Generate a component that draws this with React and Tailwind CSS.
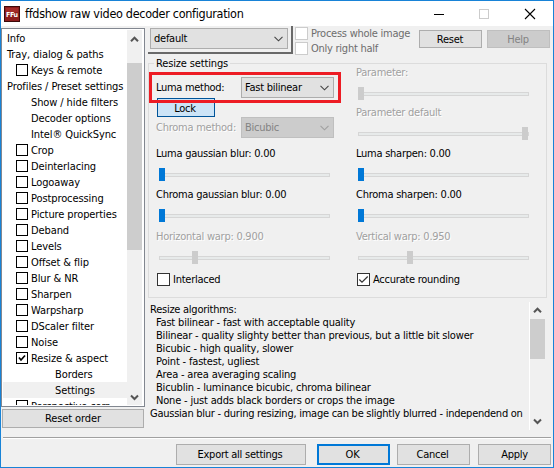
const TREE = [
  { label: 'Info', level: 0 },
  { label: 'Tray, dialog & paths', level: 0 },
  { label: 'Keys & remote', level: 1, check: true },
  { label: 'Profiles / Preset settings', level: 0 },
  { label: 'Show / hide filters', level: 1 },
  { label: 'Decoder options', level: 1 },
  { label: 'Intel® QuickSync', level: 1 },
  { label: 'Crop', level: 1, check: true },
  { label: 'Deinterlacing', level: 1, check: true },
  { label: 'Logoaway', level: 1, check: true },
  { label: 'Postprocessing', level: 1, check: true },
  { label: 'Picture properties', level: 1, check: true },
  { label: 'Deband', level: 1, check: true },
  { label: 'Levels', level: 1, check: true },
  { label: 'Offset & flip', level: 1, check: true },
  { label: 'Blur & NR', level: 1, check: true },
  { label: 'Sharpen', level: 1, check: true },
  { label: 'Warpsharp', level: 1, check: true },
  { label: 'DScaler filter', level: 1, check: true },
  { label: 'Noise', level: 1, check: true },
  { label: 'Resize & aspect', level: 1, check: true, checked: true },
  { label: 'Borders', level: 2 },
  { label: 'Settings', level: 2, selected: true },
  { label: 'Perspective corr.', level: 1, check: true },
]

const HELP = [
  'Fast bilinear - fast with acceptable quality',
  'Bilinear - quality slighty better than previous, but a little bit slower',
  'Bicubic - high quality, slower',
  'Point - fastest, ugliest',
  'Area - area averaging scaling',
  'Bicublin - luminance bicubic, chroma bilinear',
  'None - just adds black borders or crops the image',
]

const Arrow = ({ up, className = '' }) => (
  <svg width="9" height="7" viewBox="0 0 9 7" className={className}>
    <path d={up ? 'M1 5.2 4.5 1.7 8 5.2' : 'M1 1.5 4.5 5 8 1.5'} fill="none" stroke="#555" strokeWidth="2" />
  </svg>
)

const Select = ({ label, className, disabled }) => (
  <div
    className={`flex h-[21px] items-center justify-between border pl-[3px] pr-[4px] ${className} ${
      disabled ? 'border-[#bfbfbf] bg-[#ccc] text-[#838383]' : 'border-[#adadad] bg-[#e1e1e1]'}`}
  >
    <span>{label}</span>
    <svg width="9" height="6" viewBox="0 0 9 6">
      <path d="M.5.8 4.5 4.8 8.5.8" fill="none" stroke={disabled ? '#a0a0a0' : '#444'} strokeWidth="1.1" />
    </svg>
  </div>
)

const Button = ({ children, className = '' }) => (
  <div className={`flex items-center justify-center border ${className}`}>{children}</div>
)

const Check = ({ label, checked, disabled }) => (
  <div className={`flex h-[13px] items-center gap-[3px] ${disabled ? 'text-[#6d6d6d]' : ''}`}>
    <div className={`size-[13px] shrink-0 border bg-white ${disabled ? 'border-[#ccc]' : 'border-[#333]'}`}>
      {checked && (
        <svg width="11" height="11" viewBox="0 0 11 11">
          <path d="M1.3 5.5 4 8.2 9.7 2.5" fill="none" stroke="#333" strokeWidth="1.2" />
        </svg>
      )}
    </div>
    <span>{label}</span>
  </div>
)

const Slider = ({ label, pos, disabled, className = '' }) => (
  <div className={className}>
    <div className={`h-[14px] leading-[14px] ${disabled ? 'text-[#a0a0a0] [text-shadow:1px_1px_0_#fff]' : ''}`}>
      {label}
    </div>
    <div className="ml-[2px] mt-[7px] flex h-[13px] w-[171px] items-center">
      <div className="h-[4px] w-[171px] shrink-0 border border-[#d6d6d6] bg-[#e7eaea]" />
      <div
        className={`-ml-[171px] h-[13px] w-[6px] shrink-0 ${disabled ? 'bg-[#ccc]' : 'bg-[#0078d7]'}`}
        style={{ transform: `translateX(${pos}px)` }}
      />
    </div>
  </div>
)

const TitleBar = () => (
  <div className="flex h-[25px] items-center bg-white pl-[3px] text-[12.5px] tracking-[-0.3px]">
    <svg width="16" height="16" viewBox="0 0 16 16" className="mt-px">
      <rect width="16" height="16" fill="#3c0a0a" />
      <rect x="1" y="1" width="14" height="14" fill="#8c1c1c" />
      <rect x="2" y="2" width="12" height="4" fill="#a32a28" />
      <text x="2" y="10.5" fontSize="7" fontWeight="bold" fill="#fff" textLength="12" letterSpacing="0">FFu</text>
    </svg>
    <span className="ml-[5px] flex-1">ffdshow raw video decoder configuration</span>
    <svg width="102" height="12" viewBox="0 0 102 12" className="mr-[17px]" fill="none">
      <path d="M0 6.5h10" stroke="#000" />
      <rect x="45.5" y="1.5" width="9" height="9" stroke="#ccc" />
      <path d="M91 1l10 10M101 1 91 11" stroke="#000" strokeWidth="1.1" />
    </svg>
  </div>
)

const Tree = () => (
  <div className="flex h-[379px] w-[144px] border border-[#828790] bg-white p-px">
    <div className="h-[375px] w-[124px] overflow-hidden tracking-[-0.1px]">
      {TREE.map((n) => (
        <div
          key={n.label}
          className={`flex h-[16px] items-center whitespace-nowrap ${n.selected ? 'bg-[#f0f0f0]' : ''} ${
            n.level === 0 ? 'pl-[4px]' : n.level === 2 ? 'pl-[52px]' : n.check ? 'pl-[13px]' : 'pl-[28px]'}`}
        >
          {n.check && (
            <div className="mr-[3px] size-[12px] shrink-0 border border-black">
              {n.checked && (
                <svg width="10" height="10" viewBox="0 0 10 10">
                  <path d="M2 4.5 4 7 8 2.5" fill="none" stroke="#000" strokeWidth="1.7" />
                </svg>
              )}
            </div>
          )}
          <span>{n.label}</span>
        </div>
      ))}
    </div>
    <div className="flex w-[15px] flex-col items-center bg-[#f0f0f0]">
      <Arrow up className="my-[6px] h-[7px]" />
      <div className="mt-[14px] h-[187px] w-full bg-[#cdcdcd]" />
      <Arrow className="mb-[4px] mt-auto" />
    </div>
  </div>
)

const ResizeGroup = () => (
  <fieldset className="relative mt-[9px] h-[235px] w-[399px] border border-[#dcdcdc]">
    <div className="absolute left-[5px] top-[-7px] bg-[#f0f0f0] px-[2px] leading-[14px] tracking-[-0.15px]">Resize settings</div>
    <div className="flex">
      <div className="w-[200px] pl-[7px] pt-[13px]">
        <div className="flex h-[21px] items-center">
          <span className="w-[85px] tracking-[-0.3px]">Luma method:</span>
          <Select label="Fast bilinear" className="w-[93px]" />
        </div>
        <Button className="ml-px h-[19px] w-[58px] border-[#005499] bg-[#cce4f7] pr-[2px] pt-px">Lock</Button>
        <div className="flex h-[21px] items-center">
          <span className="w-[85px] text-[#a0a0a0] [text-shadow:1px_1px_0_#fff]">Chroma method:</span>
          <Select label="Bicubic" className="w-[93px]" disabled />
        </div>
        <Slider label="Luma gaussian blur: 0.00" pos={0} className="mt-[9px] pl-px -indent-px" />
        <Slider label="Chroma gaussian blur: 0.00" pos={0} className="mt-[7px] pl-px -indent-px" />
        <Slider label="Horizontal warp: 0.900" pos={33} className="mt-[8px] pl-px -indent-px" disabled />
        <div className="ml-px mt-[9px]"><Check label="Interlaced" /></div>
      </div>
      <div className="pl-[7px] pt-[3px]">
        <Slider label="Parameter:" pos={0} className="mt-[-1px]" disabled />
        <Slider label="Parameter default" pos={164} className="mt-[6px]" disabled />
        <Slider label="Luma sharpen: 0.00" pos={0} className="mt-[7px]" />
        <Slider label="Chroma sharpen: 0.00" pos={0} className="mt-[7px]" />
        <Slider label="Vertical warp: 0.950" pos={49} className="mt-[8px]" disabled />
        <div className="ml-px mt-[9px]"><Check label="Accurate rounding" checked /></div>
      </div>
    </div>
    {/* highlight over the luma method row */}
    <div className="absolute left-0 top-[8px] h-[31px] w-[192px] border-[3px] border-[#ed1c24]" />
  </fieldset>
)

const App = () => (
  <div className="h-[468px] w-[554px] overflow-hidden whitespace-nowrap border border-[#1883d7] bg-[#f0f0f0] font-['DejaVu_Sans_Condensed','DejaVu_Sans',sans-serif] text-[11px] leading-[13px] tracking-[-0.25px] text-black [font-stretch:condensed]">
    <TitleBar />
    <div className="flex h-[411px]">
      <div className="w-[144px] pt-[2px]">
        <Tree />
        <Button className="ml-px mt-[2px] h-[19px] w-[142px] border-[#adadad] bg-[#e1e1e1] tracking-[-0.1px]">Reset order</Button>
      </div>
      <div className="ml-[3px] w-[403px]">
        <div className="flex h-[28px]">
          <div className="h-[28px] w-[145px] border-b-2 border-r-2 border-[#696969] pl-[2px] pt-[2px]">
            <Select label="default" className="w-[138px]" />
          </div>
          <div className="ml-[2px] mt-px flex w-[124px] flex-col gap-[2px]">
            <Check label="Process whole image" disabled />
            <Check label="Only right half" disabled />
          </div>
          <Button className="mt-[4px] h-[18px] w-[63px] border-[#adadad] bg-[#e1e1e1] pr-px">Reset</Button>
          <Button className="ml-[5px] mt-[4px] h-[18px] w-[63px] border-[#bfbfbf] bg-[#ccc] pr-px text-[#838383]">Help</Button>
        </div>
        <ResizeGroup />
        <div className="mt-[4px] flex h-[128px]">
          <div className="w-[381px] pl-[2px] pt-px">
            <div>Resize algorithms:</div>
            {HELP.map((line) => <div key={line} className="pl-[6px] tracking-[-0.18px]">{line}</div>)}
            <div>Gaussian blur - during resizing, image can be slightly blurred - independend on</div>
          </div>
          <div className="flex w-[16px] flex-col items-center border-l border-white">
            <Arrow up className="my-[5px]" />
            <div className="h-[40px] w-full shrink-0 bg-[#cdcdcd]" />
            <Arrow className="mb-[5px] mt-auto" />
          </div>
        </div>
      </div>
    </div>
    <div className="ml-[2px] h-[2px] w-[548px] border-b border-t border-b-white border-t-[#a0a0a0]" />
    <div className="mt-[5px] flex h-[21px] pl-[175px]">
      <Button className="w-[130px] border-[#adadad] bg-[#e1e1e1] pr-[2px]">Export all settings</Button>
      <Button className="ml-[11px] w-[73px] border-2 border-[#0078d7] bg-[#e1e1e1] pr-[2px]">OK</Button>
      <Button className="ml-[7px] w-[73px] border-[#adadad] bg-[#e1e1e1] pr-[2px]">Cancel</Button>
      <Button className="ml-[8px] w-[73px] border-[#adadad] bg-[#e1e1e1]">Apply</Button>
    </div>
  </div>
)

export default App
